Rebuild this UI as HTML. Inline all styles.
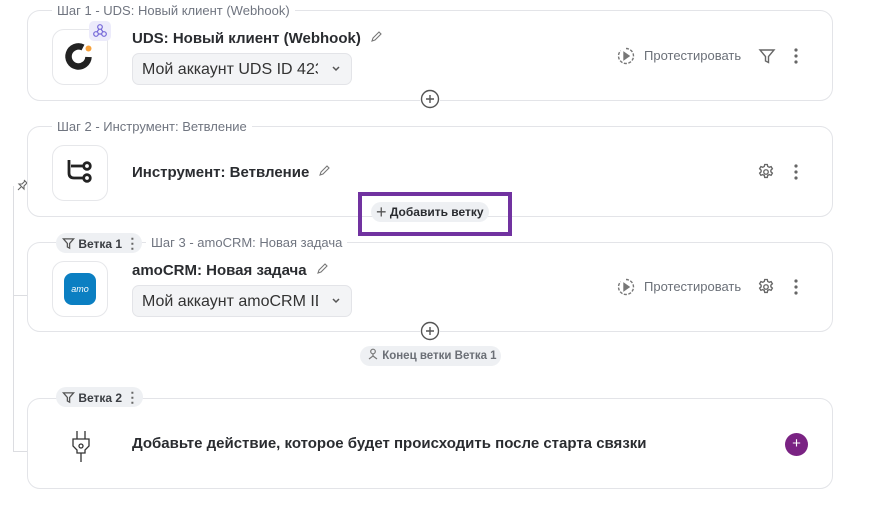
<!DOCTYPE html>
<html><head><meta charset="utf-8"><style>
*{box-sizing:border-box;margin:0;padding:0}
body{width:882px;height:518px;background:#fff;font-family:"Liberation Sans",sans-serif;position:relative;overflow:hidden;color:#222}
.card{position:absolute;left:27px;width:806px;border:1px solid #e3e4e8;border-radius:13px;background:#fff}
.leg{position:absolute;top:-8px;left:24px;background:#fff;padding:0 5px;font-size:13px;color:#707580;line-height:15px;white-space:nowrap}
.ib{position:absolute;left:24px;width:56px;height:56px;border:1px solid #e6e7ea;border-radius:12px;background:#fff}
.title{position:absolute;left:104px;font-size:15px;font-weight:bold;color:#2a2c30;white-space:nowrap}
.sel{position:absolute;left:104px;width:220px;height:32px;background:#f3f4f6;border:1px solid #e3e4e8;border-radius:7px;font-size:16px;color:#333;padding:7px 0 0 9px;overflow:hidden;white-space:nowrap}
.sel span{display:inline-block;width:176px;overflow:hidden}
.sel svg{position:absolute;right:10px;top:11px}
.test{position:absolute;font-size:13px;color:#6b7078;white-space:nowrap}
.abs{position:absolute}
.chip{position:absolute;background:#eef0f3;border-radius:10px;font-size:12px;font-weight:bold;color:#3a3d42;height:20px;line-height:20px;white-space:nowrap}
.pc{position:absolute;width:20px;height:20px;background:#fff}
</style></head><body>

<div class="abs" style="left:13px;top:186px;width:1px;height:266px;background:#dcdde1"></div>
<div class="abs" style="left:13px;top:295px;width:14px;height:1px;background:#dcdde1"></div>
<div class="abs" style="left:13px;top:451px;width:14px;height:1px;background:#dcdde1"></div>
<svg class="abs" style="left:16px;top:178px" width="14" height="14" viewBox="0 0 14 14" fill="none" stroke="#666" stroke-width="1.1"><path d="M8 2l4 4M9 3l-3 3-3 0 5 5 0-3 3-3M5 9l-3 3"/></svg>

<div class="card" style="top:10px;height:91px">
  <div class="leg">Шаг 1 - UDS: Новый клиент (Webhook)</div>
  <div class="ib" style="top:18px">
    <svg width="54" height="54" viewBox="0 0 54 54"><path d="M30 17.5A10 10 0 1 0 35.5 27" fill="none" stroke="#222" stroke-width="6.5" stroke-linecap="butt"/><circle cx="35.5" cy="18.5" r="3" fill="#f7a13b"/></svg>
  </div>
  <div class="abs" style="left:61px;top:10px;width:22px;height:20px;background:#ecebfb;border-radius:5px">
    <svg width="22" height="20" viewBox="0 0 22 20" fill="none" stroke="#7467d8" stroke-width="1.2"><circle cx="11" cy="6" r="2.3"/><circle cx="7" cy="13" r="2.3"/><circle cx="15" cy="13" r="2.3"/><path d="M10 8l-2 3M12 8l2 3M9.5 13h3"/></svg>
  </div>
  <div class="title" style="top:19px">UDS: Новый клиент (Webhook) <svg width="13" height="13" viewBox="0 0 13 13" style="margin-left:5px" fill="none" stroke="#777" stroke-width="1.1"><path d="M2 11l1-3 6-6 2 2-6 6z"/></svg></div>
  <div class="sel" style="top:42px"><span>Мой аккаунт UDS ID 4237</span><svg width="10" height="8" viewBox="0 0 10 8" fill="none" stroke="#555" stroke-width="1.5"><path d="M2 2l3 3 3-3"/></svg></div>
  <svg class="abs" style="left:589px;top:36px" width="18" height="18" viewBox="0 0 18 18" fill="none" stroke="#777" stroke-width="1.4"><path d="M9 1.5a7.5 7.5 0 1 1 -5.3 2.2" stroke-dasharray="3 1.5"/><path d="M7 5.5v7l5-3.5z" fill="#777"/></svg>
  <div class="test" style="left:616px;top:37px">Протестировать</div>
  <svg class="abs" style="left:730px;top:36px" width="18" height="18" viewBox="0 0 18 18" fill="none" stroke="#666" stroke-width="1.4"><path d="M2 3h14l-5.5 6.5v6l-3-1.5v-4.5z"/></svg>
  <svg class="abs" style="left:764px;top:36px" width="8" height="18" viewBox="0 0 8 18" fill="#666"><circle cx="4" cy="3" r="1.6"/><circle cx="4" cy="9" r="1.6"/><circle cx="4" cy="15" r="1.6"/></svg>
</div>
<svg class="pc" style="left:420px;top:89px" viewBox="0 0 20 20" fill="none" stroke="#555" stroke-width="1.4"><circle cx="10" cy="10" r="8.5" fill="#fff"/><path d="M10 6v8M6 10h8"/></svg>

<div class="card" style="top:126px;height:91px">
  <div class="leg">Шаг 2 - Инструмент: Ветвление</div>
  <div class="ib" style="top:18px">
    <svg width="54" height="54" viewBox="0 0 54 54" fill="none" stroke="#222" stroke-width="2.8"><path d="M16 14v13q0 5 5 5h9"/><path d="M18 20h12"/><circle cx="34" cy="20" r="3.3"/><circle cx="34" cy="32" r="3.3"/></svg>
  </div>
  <div class="title" style="top:37px">Инструмент: Ветвление <svg width="13" height="13" viewBox="0 0 13 13" style="margin-left:5px" fill="none" stroke="#777" stroke-width="1.1"><path d="M2 11l1-3 6-6 2 2-6 6z"/></svg></div>
  <svg class="abs" style="left:729px;top:36px" width="18" height="18" viewBox="0 0 24 24" fill="none" stroke="#666" stroke-width="1.8"><circle cx="12" cy="12" r="3"/><path d="M10.3 2h3.4l.6 2.6 2 1.1 2.5-.9 1.7 2.9-2 1.8v2.2l2 1.8-1.7 2.9-2.5-.9-2 1.1-.6 2.6h-3.4l-.6-2.6-2-1.1-2.5.9-1.7-2.9 2-1.8v-2.2l-2-1.8 1.7-2.9 2.5.9 2-1.1z"/></svg>
  <svg class="abs" style="left:764px;top:36px" width="8" height="18" viewBox="0 0 8 18" fill="#666"><circle cx="4" cy="3" r="1.6"/><circle cx="4" cy="9" r="1.6"/><circle cx="4" cy="15" r="1.6"/></svg>
</div>
<div class="chip" style="left:371px;top:202px;width:118px;padding-left:5px;font-size:12px;color:#2a2c30"><span style="font-size:18px;font-weight:normal;color:#555;vertical-align:-2px">+</span> Добавить ветку</div>
<div class="abs" style="left:358px;top:192px;width:154px;height:44px;border:4px solid #7132a0"></div>

<div class="card" style="top:242px;height:90px">
  <div class="leg" style="left:118px">Шаг 3 - amoCRM: Новая задача</div>
  <div class="ib" style="top:18px">
    <div class="abs" style="left:11px;top:11px;width:32px;height:32px;background:#0b7fc2;border-radius:8px;color:#fff;font-size:9px;font-style:italic;text-align:center;line-height:32px">amo</div>
  </div>
  <div class="title" style="top:19px">amoCRM: Новая задача <svg width="13" height="13" viewBox="0 0 13 13" style="margin-left:5px" fill="none" stroke="#777" stroke-width="1.1"><path d="M2 11l1-3 6-6 2 2-6 6z"/></svg></div>
  <div class="sel" style="top:42px"><span>Мой аккаунт amoCRM ID</span><svg width="10" height="8" viewBox="0 0 10 8" fill="none" stroke="#555" stroke-width="1.5"><path d="M2 2l3 3 3-3"/></svg></div>
  <svg class="abs" style="left:589px;top:35px" width="18" height="18" viewBox="0 0 18 18" fill="none" stroke="#777" stroke-width="1.4"><path d="M9 1.5a7.5 7.5 0 1 1 -5.3 2.2" stroke-dasharray="3 1.5"/><path d="M7 5.5v7l5-3.5z" fill="#777"/></svg>
  <div class="test" style="left:616px;top:36px">Протестировать</div>
  <svg class="abs" style="left:729px;top:35px" width="18" height="18" viewBox="0 0 24 24" fill="none" stroke="#666" stroke-width="1.8"><circle cx="12" cy="12" r="3"/><path d="M10.3 2h3.4l.6 2.6 2 1.1 2.5-.9 1.7 2.9-2 1.8v2.2l2 1.8-1.7 2.9-2.5-.9-2 1.1-.6 2.6h-3.4l-.6-2.6-2-1.1-2.5.9-1.7-2.9 2-1.8v-2.2l-2-1.8 1.7-2.9 2.5.9 2-1.1z"/></svg>
  <svg class="abs" style="left:764px;top:35px" width="8" height="18" viewBox="0 0 8 18" fill="#666"><circle cx="4" cy="3" r="1.6"/><circle cx="4" cy="9" r="1.6"/><circle cx="4" cy="15" r="1.6"/></svg>
</div>
<div class="chip" style="left:56px;top:233px;width:86px;padding-left:6px">
  <svg width="13" height="13" viewBox="0 0 14 14" style="vertical-align:-2px" fill="none" stroke="#555" stroke-width="1.4"><path d="M1.5 2h11l-4.3 5v5l-2.4-1.2V7z"/></svg> Ветка 1 <span style="color:#666;font-size:14px">⋮</span></div>
<svg class="pc" style="left:420px;top:321px" viewBox="0 0 20 20" fill="none" stroke="#555" stroke-width="1.4"><circle cx="10" cy="10" r="8.5" fill="#fff"/><path d="M10 6v8M6 10h8"/></svg>
<div class="chip" style="left:360px;top:346px;width:141px;padding-left:7px;font-size:11.5px;color:#6b6f76">
  <svg width="12" height="13" viewBox="0 0 12 13" style="vertical-align:-2px" fill="none" stroke="#777" stroke-width="1.2"><circle cx="6" cy="3.5" r="2.3"/><path d="M6 6v2l-4 3M6 8l4 3"/></svg> Конец ветки Ветка 1</div>

<div class="card" style="top:398px;height:91px">
  <svg class="abs" style="left:41px;top:31px" width="24" height="34" viewBox="0 0 24 34" fill="none" stroke="#333" stroke-width="1.3"><path d="M8 1v8M16 1v8M4 9h16v7l-4 4v3h-8v-3l-4-4z"/><circle cx="12" cy="16" r="2"/><path d="M12 23v9"/></svg>
  <div class="title" style="top:36px">Добавьте действие, которое будет происходить после старта связки</div>
  <div class="abs" style="left:757px;top:34px;width:23px;height:23px;border-radius:50%;background:#7a2383;color:#fff;text-align:center;line-height:22px;font-size:15px">+</div>
</div>
<div class="chip" style="left:56px;top:387px;width:87px;padding-left:6px">
  <svg width="13" height="13" viewBox="0 0 14 14" style="vertical-align:-2px" fill="none" stroke="#555" stroke-width="1.4"><path d="M1.5 2h11l-4.3 5v5l-2.4-1.2V7z"/></svg> Ветка 2 <span style="color:#666;font-size:14px">⋮</span></div>

</body></html>
